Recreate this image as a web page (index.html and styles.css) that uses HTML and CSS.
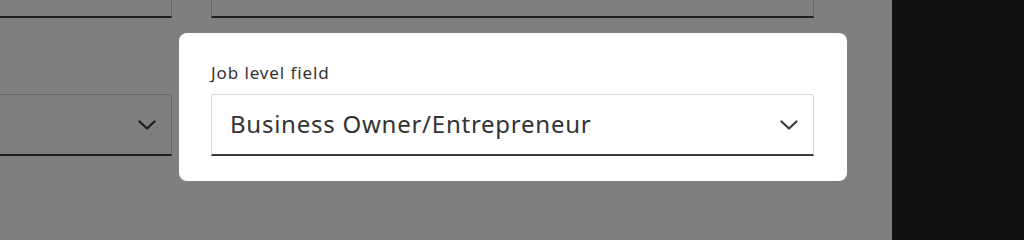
FILE: index.html
```html
<!DOCTYPE html>
<html lang="en">
<head>
<meta charset="utf-8">
<title>Job level field</title>
<link rel="stylesheet" href="styles.css">
</head>
<body>
<div class="app">
  <main class="page">
    <div class="form">
      <div class="row row-top">
        <div class="field field-left"></div>
        <div class="field field-right"></div>
      </div>
      <div class="row row-mid">
        <div class="field field-left select-bg">
          <svg class="chev" viewBox="0 0 18 10" width="18" height="10"><polyline points="1.5,1.5 9,8.5 16.5,1.5"/></svg>
        </div>
        <div class="field field-right select-bg">
          <svg class="chev" viewBox="0 0 18 10" width="18" height="10"><polyline points="1.5,1.5 9,8.5 16.5,1.5"/></svg>
        </div>
      </div>
    </div>
    <div class="overlay"></div>
    <section class="spotlight">
      <label class="label" for="job-level">Job level field</label>
      <div class="select" id="job-level">
        <span class="value">Business Owner/Entrepreneur</span>
        <svg class="chev" viewBox="0 0 18 10" width="18" height="10"><polyline points="1.5,1.5 9,8.5 16.5,1.5"/></svg>
      </div>
    </section>
  </main>
  <aside class="side"></aside>
</div>
</body>
</html>
```

FILE: styles.css
```css
* { box-sizing: border-box; }

html, body {
  margin: 0;
  padding: 0;
  width: 1024px;
  min-height: 100vh;
  overflow: hidden;
  background: #808080;
  font-family: "Noto Sans", "Open Sans", sans-serif;
  color: #3c3c3c;
}

.app {
  display: flex;
  width: 1024px;
  height: 100vh;
  min-height: 215px;
}

.page {
  position: relative;
  flex: 0 0 892px;
  background: #ffffff;
  overflow: hidden;
}

.side {
  flex: 1 1 auto;
  background: #111111;
}

.form {
  display: flex;
  flex-direction: column;
  gap: 76px;
  margin-top: -44px;
}

.row {
  display: flex;
  gap: 39px;
}

.field {
  height: 62px;
  background: #ffffff;
  border: 1px solid #cfcfcf;
  border-bottom: 2px solid #3c3c3c;
  border-radius: 2px 2px 0 0;
}

.field-left {
  flex: 0 0 192px;
  margin-left: -20px;
}

.field-right {
  flex: 0 0 603px;
}

.select-bg {
  display: flex;
  align-items: center;
  justify-content: flex-end;
  padding-right: 15px;
}

.chev {
  display: block;
  fill: none;
  stroke: #3c3c3c;
  stroke-width: 2.3;
  stroke-linecap: round;
  stroke-linejoin: round;
}

.overlay {
  position: absolute;
  inset: 0;
  background: rgba(0, 0, 0, 0.5);
}

.spotlight {
  position: absolute;
  left: 179px;
  top: 33px;
  width: 668px;
  height: 148px;
  background: #ffffff;
  border-radius: 8px;
  padding: 30px 32px 0 32px;
  display: flex;
  flex-direction: column;
  gap: 11px;
}

.label {
  font-size: 17px;
  line-height: 20px;
  letter-spacing: 0.9px;
  color: #333333;
}

.select {
  width: 603px;
  height: 62px;
  border: 1px solid #d9d9d9;
  border-bottom: 2px solid #3c3c3c;
  border-radius: 3px 3px 0 0;
  display: flex;
  align-items: center;
  justify-content: space-between;
  padding: 0 15px 0 18px;
}

.value {
  font-size: 24px;
  line-height: 30px;
  letter-spacing: 0.75px;
  color: #333333;
  padding-bottom: 2px;
}
```
